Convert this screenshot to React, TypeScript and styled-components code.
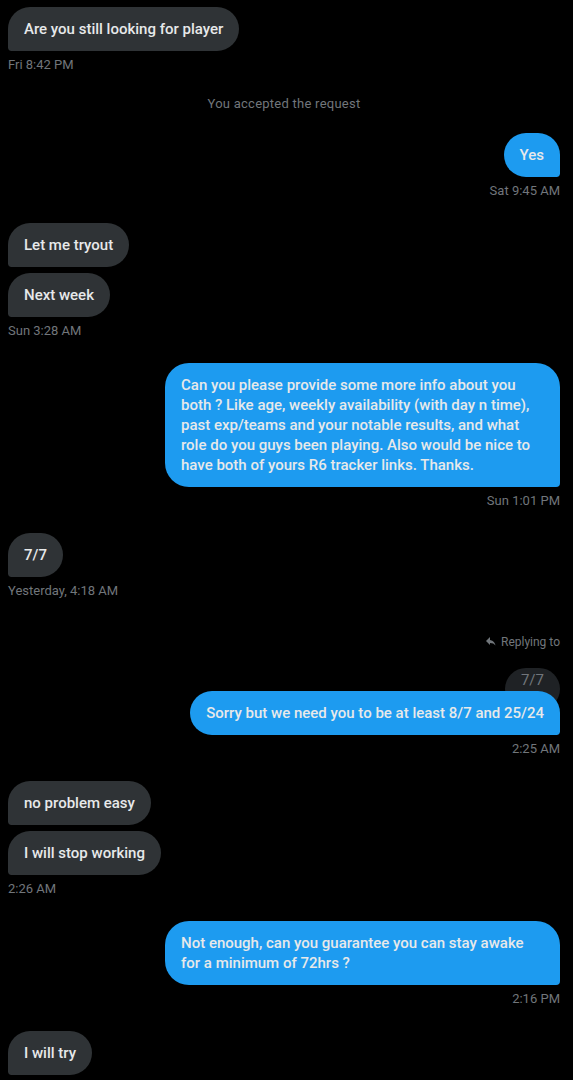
import React from "react";
import styled, { createGlobalStyle } from "styled-components";

const Global = createGlobalStyle`
  html, body { margin: 0; padding: 0; background: #000; }
  body { font-family: Roboto, "Noto Sans", sans-serif; -webkit-font-smoothing: antialiased; }
`;

const Thread = styled.div`
  display: flex;
  flex-direction: column;
  padding: 7px 13px 0 8px;
  background: #000;
  min-height: 1080px;
  box-sizing: border-box;
`;

const Group = styled.section<{ $mine?: boolean; $reply?: boolean }>`
  display: flex;
  flex-direction: column;
  align-items: ${(p) => (p.$mine ? "flex-end" : "flex-start")};
  gap: 6px;
  margin-top: ${(p) => (p.$reply ? "11px" : "0")};
  margin-bottom: 24px;
`;

const Bubble = styled.div<{ $mine?: boolean }>`
  max-width: 363px;
  padding: 12px 16px;
  border-radius: 24px;
  ${(p) =>
    p.$mine
      ? "border-bottom-right-radius: 4px; background: #1d9bf0;"
      : "border-bottom-left-radius: 4px; background: #2f3336;"}
  color: #e7e9ea;
  font-size: 15px;
  line-height: 20px;
  font-weight: 500;
  position: relative;
  z-index: 1;
`;

const Stamp = styled.div`
  color: #71767b;
  font-size: 13px;
  line-height: 16px;
`;

const Notice = styled.div`
  align-self: center;
  color: #71767b;
  font-size: 13px;
  line-height: 16px;
  letter-spacing: 0.25px;
  margin: -1px 0 21px;
`;

const ReplyLabel = styled.div`
  display: flex;
  align-items: center;
  gap: 4px;
  color: #71767b;
  font-size: 12px;
  line-height: 16px;
  margin-bottom: 12px;
`;

const Quoted = styled.div`
  padding: 2px 16px 20px;
  border-radius: 24px;
  background: #1f2225;
  color: #71767b;
  font-size: 15px;
  line-height: 20px;
  margin-bottom: -25px;
`;

const ReplyIcon = () => (
  <svg width="12" height="12" viewBox="0 0 24 24" fill="#71767b">
    <path d="M10 6V2L2 10l8 8v-4.1c5 0 8.5 1.6 11 5.1-1-5-4-10-11-11z" />
  </svg>
);

export default function App() {
  return (
    <>
      <Global />
      <Thread>
        <Group>
          <Bubble>Are you still looking for player</Bubble>
          <Stamp>Fri 8:42 PM</Stamp>
        </Group>
        <Notice>You accepted the request</Notice>
        <Group $mine>
          <Bubble $mine>Yes</Bubble>
          <Stamp>Sat 9:45 AM</Stamp>
        </Group>
        <Group>
          <Bubble>Let me tryout</Bubble>
          <Bubble>Next week</Bubble>
          <Stamp>Sun 3:28 AM</Stamp>
        </Group>
        <Group $mine>
          <Bubble $mine>
            Can you please provide some more info about you both ? Like age, weekly availability (with day n
            time), past exp/teams and your notable results, and what role do you guys been playing. Also would
            be nice to have both of yours R6 tracker links. Thanks.
          </Bubble>
          <Stamp>Sun 1:01 PM</Stamp>
        </Group>
        <Group>
          <Bubble>7/7</Bubble>
          <Stamp>Yesterday, 4:18 AM</Stamp>
        </Group>
        <Group $mine $reply>
          <ReplyLabel>
            <ReplyIcon />
            Replying to
          </ReplyLabel>
          <Quoted>7/7</Quoted>
          <Bubble $mine>Sorry but we need you to be at least 8/7 and 25/24</Bubble>
          <Stamp>2:25 AM</Stamp>
        </Group>
        <Group>
          <Bubble>no problem easy</Bubble>
          <Bubble>I will stop working</Bubble>
          <Stamp>2:26 AM</Stamp>
        </Group>
        <Group $mine>
          <Bubble $mine>Not enough, can you guarantee you can stay awake for a minimum of 72hrs ?</Bubble>
          <Stamp>2:16 PM</Stamp>
        </Group>
        <Group>
          <Bubble>I will try</Bubble>
        </Group>
      </Thread>
    </>
  );
}
